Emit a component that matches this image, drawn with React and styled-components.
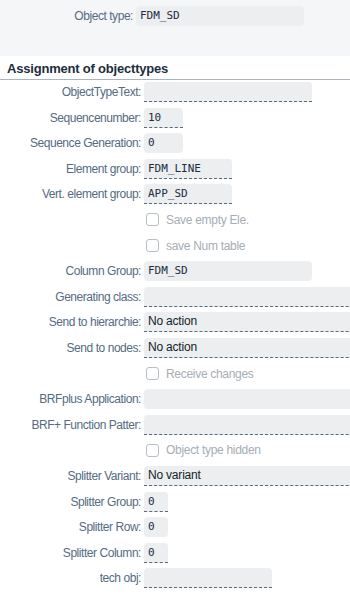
import styled, { createGlobalStyle } from "styled-components";

const GlobalStyle = createGlobalStyle`
  html, body {
    margin: 0;
    padding: 0;
    background: #ffffff;
    overflow: hidden;
  }
  body {
    font-family: "Liberation Sans", Arial, sans-serif;
  }
`;

const Page = styled.div`
  width: 350px;
  height: 597px;
  overflow: hidden;
`;

const HeaderBand = styled.div`
  background: #f5f6f7;
  height: 56px;
  padding-top: 6px;
  box-sizing: border-box;
`;

const HeaderRow = styled.div`
  display: grid;
  grid-template-columns: 133px 168px;
  column-gap: 3px;
  align-items: center;
`;

const SectionTitle = styled.h2`
  margin: 0;
  padding: 3px 7px 0;
  height: 20px;
  font-size: 13px;
  letter-spacing: -0.2px;
  font-weight: bold;
  color: #1d2d3e;
  line-height: 20px;
  border-bottom: 1px solid #a9b4be;
`;

const Form = styled.div`
  display: grid;
  grid-template-columns: 141px 1fr;
  grid-auto-rows: 25.6px;
  column-gap: 3px;
  padding-top: 2px;
`;

const Label = styled.div`
  text-align: right;
  font-size: 12px;
  letter-spacing: -0.45px;
  color: #556b82;
  white-space: nowrap;
  line-height: 20px;
  height: 20px;
`;

const Field = styled.div`
  box-sizing: border-box;
  width: ${(p) => p.width}px;
  height: 20px;
  background: #eceef0;
  border-radius: 4px;
  padding: 0 4px;
  font-family: ${(p) =>
    p.mono ? '"DejaVu Sans Mono", "Liberation Mono", monospace' : '"Liberation Sans", Arial, sans-serif'};
  font-size: ${(p) => (p.mono ? "11px" : "12px")};
  letter-spacing: ${(p) => (p.mono ? "0" : "-0.2px")};
  color: ${(p) => (p.mono ? "#1d2d3e" : "#131e29")};
  line-height: 20px;
  white-space: nowrap;
  overflow: hidden;
  ${(p) =>
    p.editable &&
    `
    border-bottom: 1px dashed #556b82;
    border-bottom-left-radius: 0;
    border-bottom-right-radius: 0;
    line-height: 19px;
  `}
`;

const CheckRow = styled.label`
  grid-column: 2;
  display: flex;
  align-items: center;
  gap: 7px;
  height: 20px;
  padding-left: 2px;
  font-size: 12px;
  letter-spacing: -0.3px;
  color: #a6adb5;
`;

const Box = styled.span`
  box-sizing: border-box;
  width: 13px;
  height: 13px;
  border: 1px solid #b8bec5;
  border-radius: 3px;
  background: #ffffff;
`;

const rows = [
  { label: "ObjectTypeText:", width: 168, editable: true },
  { label: "Sequencenumber:", value: "10", mono: true, width: 39, editable: true },
  { label: "Sequence Generation:", value: "0", mono: true, width: 39 },
  { label: "Element group:", value: "FDM_LINE", mono: true, width: 88, editable: true },
  { label: "Vert. element group:", value: "APP_SD", mono: true, width: 88, editable: true },
  { check: "Save empty Ele." },
  { check: "save Num table" },
  { label: "Column Group:", value: "FDM_SD", mono: true, width: 168 },
  { label: "Generating class:", width: 240, editable: true },
  { label: "Send to hierarchie:", value: "No action", width: 240, editable: true },
  { label: "Send to nodes:", value: "No action", width: 240, editable: true },
  { check: "Receive changes" },
  { label: "BRFplus Application:", width: 240 },
  { label: "BRF+ Function Patter:", width: 240, editable: true },
  { check: "Object type hidden" },
  { label: "Splitter Variant:", value: "No variant", width: 240, editable: true },
  { label: "Splitter Group:", value: "0", mono: true, width: 24, editable: true },
  { label: "Splitter Row:", value: "0", mono: true, width: 24 },
  { label: "Splitter Column:", value: "0", mono: true, width: 24, editable: true },
  { label: "tech obj:", width: 128, editable: true },
];

export default function App() {
  return (
    <Page>
      <GlobalStyle />
      <HeaderBand>
        <HeaderRow>
          <Label>Object type:</Label>
          <Field width={168} mono>
            FDM_SD
          </Field>
        </HeaderRow>
      </HeaderBand>
      <SectionTitle>Assignment of objecttypes</SectionTitle>
      <Form>
        {rows.map((r, i) =>
          r.check ? (
            <CheckRow key={i}>
              <Box />
              {r.check}
            </CheckRow>
          ) : (
            [
              <Label key={i + "l"}>{r.label}</Label>,
              <Field key={i + "f"} width={r.width} mono={r.mono} editable={r.editable}>
                {r.value}
              </Field>,
            ]
          )
        )}
      </Form>
    </Page>
  );
}
